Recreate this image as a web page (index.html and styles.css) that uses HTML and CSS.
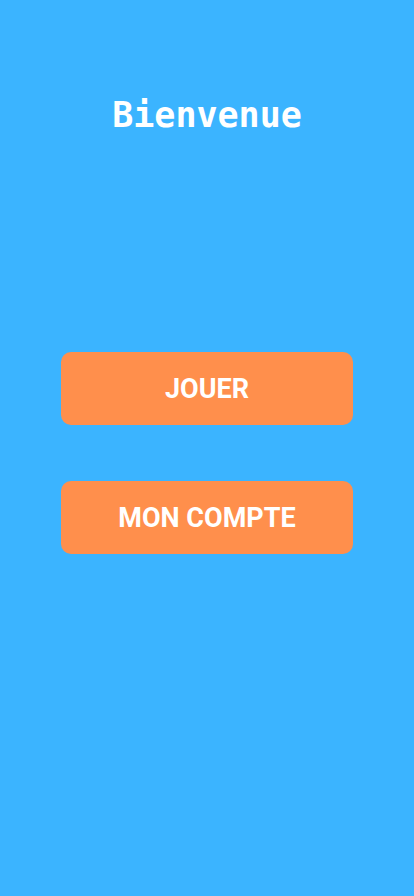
FILE: index.html
```html
<!DOCTYPE html>
<html lang="fr">
<head>
<meta charset="utf-8">
<link rel="stylesheet" href="styles.css">
</head>
<body>
<main class="screen">
  <h1 class="title">Bienvenue</h1>
  <div class="actions">
    <button class="btn">JOUER</button>
    <button class="btn">MON COMPTE</button>
  </div>
</main>
</body>
</html>
```
FILE: styles.css
```css
html, body {
  margin: 0;
  padding: 0;
}
body {
  background: #3bb4ff;
  width: 414px;
  height: 896px;
  overflow: hidden;
}
.screen {
  display: flex;
  flex-direction: column;
  align-items: center;
}
.title {
  margin: 92px 0 0;
  font-family: "DejaVu Sans Mono", monospace;
  font-weight: bold;
  font-size: 35px;
  line-height: 46px;
  color: #ffffff;
}
.actions {
  margin-top: 214px;
  display: flex;
  flex-direction: column;
  gap: 56px;
}
.btn {
  width: 292px;
  height: 73px;
  border: none;
  border-radius: 10px;
  background: #ff8f4c;
  color: #ffffff;
  font-family: Roboto, sans-serif;
  font-weight: bold;
  font-size: 27px;
  padding: 0;
}
```
